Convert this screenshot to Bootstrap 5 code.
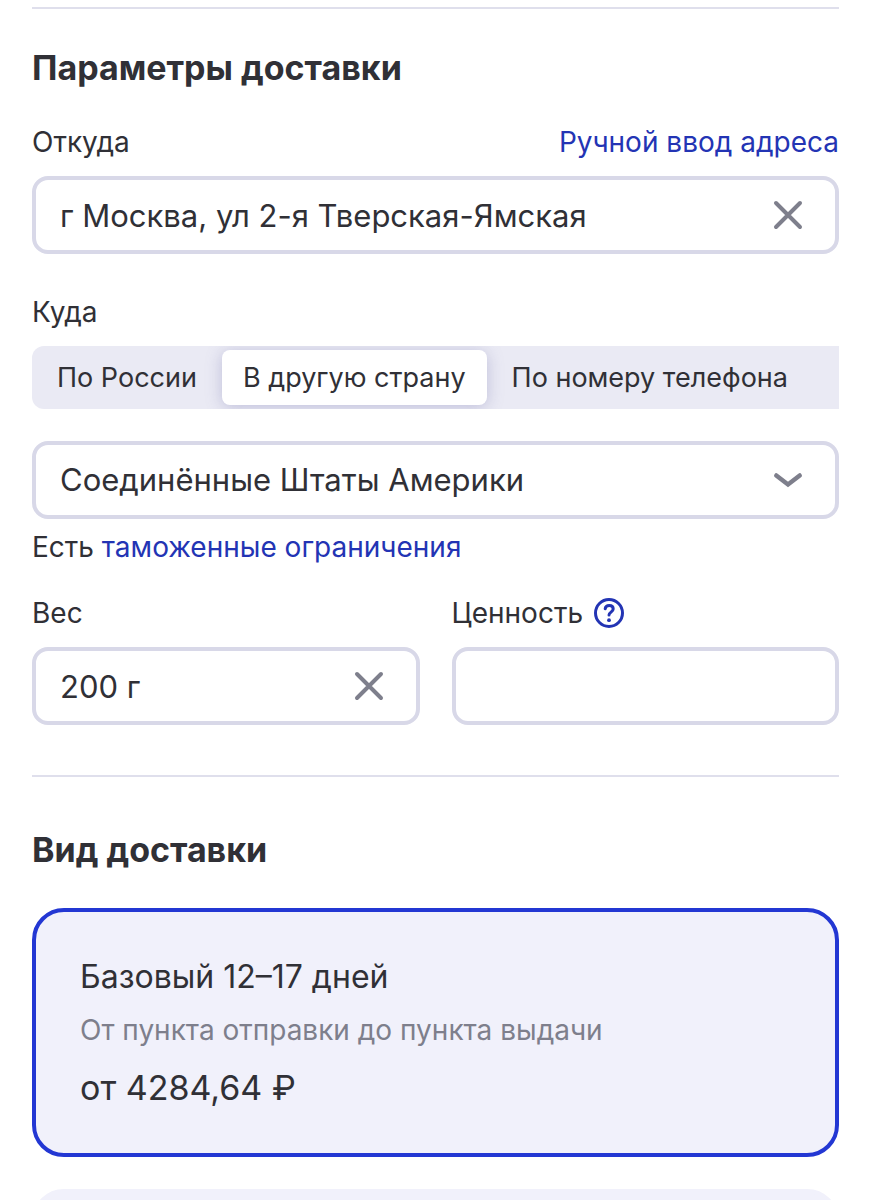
<!DOCTYPE html>
<html lang="ru">
<head>
<meta charset="utf-8">
<meta name="viewport" content="width=device-width, initial-scale=1">
<title>Параметры доставки</title>
<link rel="stylesheet" href="https://cdn.jsdelivr.net/npm/bootstrap@5.3.0/dist/css/bootstrap.min.css">
<style>
  :root { --ink: #303036; --link: #2334b4; --line: #d8d8e8; --muted: #7e7f8c; --accent: #2337d3; --soft: #f1f1fb; }
  body { font-family: Inter, "Noto Sans", sans-serif; color: var(--ink); font-size: 28px; line-height: 40px; }
  .page { padding: 7px 32px 32px; }
  .rule { height: 2px; margin: 0; border: 0; background: #dfdfec; opacity: 1; }
  .section-title { font-size: 34px; line-height: 40px; font-weight: 700; margin: 0; }
  .params { padding: 39px 0 50px; }
  .params .section-title { margin-bottom: 34px; }
  .kinds { padding-top: 53px; }
  .kinds .section-title { margin-bottom: 38px; }
  .text-link { color: var(--link); text-decoration: none; }
  .field-label { margin-bottom: 14px; }
  .field-block { margin-bottom: 38px; }
  .field { height: 78px; padding: 0 84px 0 24px; border: 4px solid var(--line); border-radius: 16px; font-size: 31px; line-height: 40px; color: var(--ink); background-color: #fff; }
  .field:focus { border-color: var(--accent); box-shadow: none; color: var(--ink); }
  select.field { background-image: none; }
  .field-icon { width: 32px; height: 32px; right: 35px; color: var(--muted); }
  .switch-bar { padding: 4px; gap: 4px; margin-bottom: 32px; background: #eaeaf4; border-radius: 12px 0 0 12px; }
  .switch-item { padding: 8px 21px; border: 0; border-radius: 8px; font-size: 27px; line-height: 39px; white-space: nowrap; color: var(--ink); }
  .btn-check:checked + .switch-item { background: #fff; color: var(--ink); box-shadow: 0 2px 16px rgba(110, 110, 170, .35); }
  .hint { padding-top: 8px; margin-bottom: 26px; }
  .pair { --bs-gutter-x: 32px; }
  .help-btn { width: 32px; height: 32px; margin-left: 10px; color: var(--link); }
  .tariff { padding: 45px 44px; margin-bottom: 32px; border: 4px solid var(--soft); border-radius: 32px; background: var(--soft); cursor: pointer; }
  .btn-check:checked + .tariff { border-color: var(--accent); }
  .tariff-name { font-size: 32px; }
  .tariff-note { margin: 13px 0 18px; color: var(--muted); }
  .tariff-price { font-size: 34px; }
  .tariff-next { min-height: 249px; }
</style>
</head>
<body>
<main class="page">
  <hr class="rule">
  <form>
    <section class="params">
      <h2 class="section-title">Параметры доставки</h2>

      <div class="field-block">
        <div class="d-flex justify-content-between field-label">
          <label for="from">Откуда</label>
          <a class="text-link" href="#manual">Ручной ввод адреса</a>
        </div>
        <div class="position-relative d-flex align-items-center">
          <input class="form-control field" id="from" type="text" value="г Москва, ул 2-я Тверская-Ямская">
          <button type="button" class="btn p-0 border-0 position-absolute d-flex field-icon" aria-label="Очистить адрес">
            <svg width="32" height="32" viewBox="0 0 32 32" fill="none" stroke="currentColor" stroke-width="4" stroke-linecap="round"><path d="M4 4l24 24M28 4L4 28"/></svg>
          </button>
        </div>
      </div>

      <label class="d-block field-label" for="country">Куда</label>
      <div class="d-flex overflow-hidden switch-bar" role="group" aria-label="Направление">
        <input class="btn-check" type="radio" name="dest" id="dest-ru">
        <label class="btn switch-item" for="dest-ru">По России</label>
        <input class="btn-check" type="radio" name="dest" id="dest-abroad" checked>
        <label class="btn switch-item" for="dest-abroad">В другую страну</label>
        <input class="btn-check" type="radio" name="dest" id="dest-phone">
        <label class="btn switch-item" for="dest-phone">По номеру телефона</label>
      </div>

      <div class="position-relative d-flex align-items-center">
        <select class="form-select field" id="country">
          <option selected>Соединённые Штаты Америки</option>
        </select>
        <svg class="position-absolute pe-none field-icon" viewBox="0 0 32 32" fill="none" stroke="currentColor" stroke-width="4.500" stroke-linecap="round" aria-hidden="true"><path d="M4.300 11.500l11.700 9 11.700-9"/></svg>
      </div>
      <p class="hint">Есть <a class="text-link" href="#customs">таможенные ограничения</a></p>

      <div class="row pair">
        <div class="col-6">
          <label class="d-block field-label" for="weight">Вес</label>
          <div class="position-relative d-flex align-items-center">
            <input class="form-control field" id="weight" type="text" value="200 г">
            <button type="button" class="btn p-0 border-0 position-absolute d-flex field-icon" aria-label="Очистить вес">
              <svg width="32" height="32" viewBox="0 0 32 32" fill="none" stroke="currentColor" stroke-width="4" stroke-linecap="round"><path d="M4 4l24 24M28 4L4 28"/></svg>
            </button>
          </div>
        </div>
        <div class="col-6">
          <div class="d-flex align-items-center field-label">
            <label for="price">Ценность</label>
            <button type="button" class="btn p-0 border-0 d-flex help-btn" aria-label="Что такое ценность">
              <svg width="32" height="32" viewBox="0 0 32 32" fill="none" stroke="currentColor" stroke-width="3" stroke-linecap="round" stroke-linejoin="round"><circle cx="16" cy="16" r="13.500"/><path d="M12.200 11.800C12.500 9.500 14 8.600 16.200 8.600c2.300 0 4 1.300 4 3.400 0 3-4.200 3.200-4.200 6"/><circle cx="16" cy="23.200" r="1.900" fill="currentColor" stroke="none"/></svg>
            </button>
          </div>
          <input class="form-control field" id="price" type="text">
        </div>
      </div>
    </section>

    <hr class="rule">

    <section class="kinds">
      <h2 class="section-title">Вид доставки</h2>
      <input class="btn-check" type="radio" name="tariff" id="tariff-base" checked>
      <label class="d-flex flex-column tariff" for="tariff-base">
        <span class="tariff-name">Базовый 12–17 дней</span>
        <span class="tariff-note">От пункта отправки до пункта выдачи</span>
        <span class="tariff-price">от 4284,64 ₽</span>
      </label>
      <div class="tariff tariff-next"></div>
    </section>
  </form>
</main>
<script src="https://cdn.jsdelivr.net/npm/bootstrap@5.3.0/dist/js/bootstrap.bundle.min.js"></script>
</body>
</html>
